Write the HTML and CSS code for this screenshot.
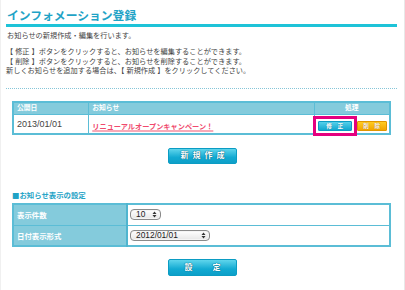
FILE: index.html
```html
<!DOCTYPE html>
<html lang="ja">
<head>
<meta charset="utf-8">
<title>インフォメーション登録</title>
<link rel="stylesheet" href="styles.css">
</head>
<body>
<div class="page">
  <h1 class="title">インフォメーション登録</h1>
  <p class="intro">お知らせの新規作成・編集を行います。</p>
  <p class="help">【 修正 】ボタンをクリックすると、お知らせを編集することができます。<br>【 削除 】ボタンをクリックすると、お知らせを削除することができます。<br>新しくお知らせを追加する場合は、【 新規作成 】をクリックしてください。</p>
  <div class="dots"></div>
  <table class="list">
    <tr class="head">
      <th class="c-date">公開日</th>
      <th class="c-title">お知らせ</th>
      <th class="c-act">処理</th>
    </tr>
    <tr class="row">
      <td class="date">2013/01/01</td>
      <td><a class="news" href="#">リニューアルオープンキャンペーン！</a></td>
      <td class="act">
        <div class="acts">
          <span class="mark"><span class="btn-s teal">修　正</span></span>
          <span class="btn-s orange">削　除</span>
        </div>
      </td>
    </tr>
  </table>
  <div class="btn-row"><span class="btn-l">新規作成</span></div>
  <h2 class="sec">■お知らせ表示の設定</h2>
  <table class="settings">
    <tr>
      <th>表示件数</th>
      <td><span class="sel short"><span class="val">10</span><svg class="arr" width="5" height="7" viewBox="0 0 5 7"><path d="M0.5 3 L2.5 0.5 L4.5 3 Z M0.5 4 L2.5 6.5 L4.5 4 Z" fill="#333"/></svg></span></td>
    </tr>
    <tr>
      <th>日付表示形式</th>
      <td><span class="sel long"><span class="val">2012/01/01</span><svg class="arr" width="5" height="7" viewBox="0 0 5 7"><path d="M0.5 3 L2.5 0.5 L4.5 3 Z M0.5 4 L2.5 6.5 L4.5 4 Z" fill="#333"/></svg></span></td>
    </tr>
  </table>
  <div class="btn-row last"><span class="btn-l set">設　定</span></div>
</div>
</body>
</html>
```
FILE: styles.css
```css
* { box-sizing: border-box; }
html, body { margin: 0; padding: 0; background: #fff; }
body {
  font-family: "Liberation Sans", "Noto Sans CJK JP", sans-serif;
  color: #444;
}
.page {
  width: 405px;
  height: 290px;
  border-left: 1px solid #f0f0f0;
  border-right: 1px solid #e8e8e8;
  padding: 8px 7px 0 5px;
  overflow: hidden;
}
.title {
  margin: 0;
  font-family: "Noto Sans CJK JP", sans-serif;
  font-size: 11.8px;
  line-height: 14px;
  font-weight: bold;
  color: #1fa3c6;
  padding: 0 0 2px 1px;
  border-bottom: 3px solid #1ec3d8;
}
.intro {
  margin: 4px 0 0 1px;
  font-size: 7.2px;
  line-height: 10px;
}
.help {
  margin: 6px 0 0 0;
  font-size: 7.2px;
  line-height: 9.7px;
}
.dots {
  margin-top: 12px;
  border-top: 1px dotted #86c6d8;
}
table { border-collapse: collapse; }
.list {
  margin: 12px 6px 0 6px;
  width: 379px;
  border: 2px solid #5bbdd6;
}
.list th, .list td {
  border: 1px solid #5bbdd6;
  padding: 0 0 0 3px;
  text-align: left;
}
.list .head th {
  height: 12px;
  background: #84cbdc;
  color: #fff;
  font-size: 6.8px;
  font-weight: bold;
  line-height: 10px;
}
.c-date { width: 76px; }
.c-title { width: 227px; }
.c-act { width: 76px; text-align: center !important; padding: 0 !important; }
.list .row td {
  height: 20px;
  vertical-align: middle;
}
.date {
  font-size: 9px;
  color: #444;
}
.news {
  font-size: 7.2px;
  font-weight: bold;
  color: #f04a6e;
  text-decoration: underline;
  text-decoration-color: #f9a9b8;
  text-decoration-thickness: 2px;
  text-underline-offset: 1px;
}
.list td.act { padding: 0; }
.acts {
  display: flex;
  justify-content: center;
  gap: 5px;
  padding-top: 4px;
  padding-left: 1px;
}
.mark { position: relative; display: block; }
.mark::after {
  content: "";
  position: absolute;
  left: -5px; top: -5px; right: -5px; bottom: -5px;
  border: 3px solid #e4007f;
}
.btn-s {
  display: block;
  height: 10px;
  font-size: 5.6px;
  line-height: 9px;
  text-align: center;
  color: #fff;
  border-radius: 1px;
  font-weight: bold;
}
.btn-s.teal {
  width: 34px;
  background: linear-gradient(#55d0ea, #11a7cf);
  border: 1px solid #0b9cc3;
  text-shadow: 0 0 1px #06708f;
}
.btn-s.orange {
  width: 30px;
  background: linear-gradient(#ffcc22, #f2a500);
  border: 1px solid #e09600;
  text-shadow: 0 0 1px #a06000;
}
.btn-row {
  margin-top: 13px;
  display: flex;
  justify-content: center;
  padding-left: 2px;
}
.btn-row.last { margin-top: 12px; }
.btn-l {
  display: block;
  width: 69px;
  height: 16px;
  background: linear-gradient(#5fd5ec, #12aad2 60%, #0d9fc8);
  border: 1px solid #0b9cc3;
  border-radius: 2px;
  color: #fff;
  font-size: 8px;
  font-weight: bold;
  line-height: 14px;
  text-align: center;
  letter-spacing: 4px;
  padding-left: 4px;
  text-shadow: 0 0 1px #05607c, 0 0 1px #05607c;
}
.btn-l.set {
  height: 17px;
  line-height: 15px;
  letter-spacing: 6px;
  padding-left: 6px;
}
.sec {
  margin: 26px 0 0 6px;
  font-family: "Noto Sans CJK JP", sans-serif;
  font-size: 7.4px;
  line-height: 10px;
  font-weight: bold;
  color: #1fa3c6;
}
.settings {
  margin: 3px 6px 0 6px;
  width: 379px;
  border: 2px solid #5bbdd6;
}
.settings th, .settings td {
  border: 1px solid #5bbdd6;
  height: 21px;
  vertical-align: middle;
}
.settings th {
  width: 114px;
  background: #84cbdc;
  color: #fff;
  font-size: 7.4px;
  font-weight: bold;
  text-align: left;
  padding: 0 0 0 3px;
  border-right: 2px solid #4fb5cf;
}
.settings td { padding: 0 0 0 2px; }
.sel {
  display: flex;
  align-items: center;
  justify-content: space-between;
  height: 11px;
  border: 1px solid #8a8a8a;
  border-radius: 4px;
  background: linear-gradient(#ffffff, #e6e6e6);
  padding: 0 3px 0 5px;
  font-size: 8.4px;
  color: #222;
  box-shadow: inset 0 0 0 1px #f4f4f4;
}
.sel.short { width: 31px; }
.sel.long { width: 80px; }
.sel .val { line-height: 9px; }
.arr { display: block; }
```
